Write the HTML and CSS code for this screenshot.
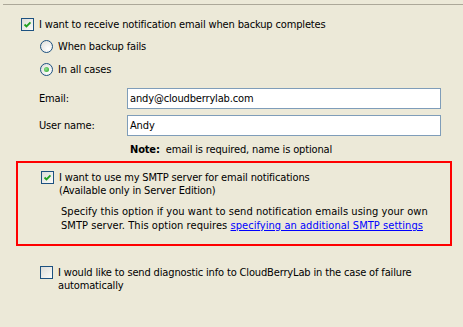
FILE: index.html
```html
<!DOCTYPE html>
<html>
<head>
    <title>Notification settings</title>
    <link rel="stylesheet" href="styles.css">
</head>
<body>
    <div class="rule"></div>
    <div class="settings">
        <div class="check-row main">
            <span class="cb checked"><svg viewBox="0 0 13 13"><path d="M3 6.5 L5.3 8.8 L10 4" /></svg></span>
            <span class="txt">I want to receive notification email when backup completes</span>
        </div>
        <div class="radio-row first">
            <span class="rb"></span>
            <span class="txt">When backup fails</span>
        </div>
        <div class="radio-row">
            <span class="rb on"></span>
            <span class="txt">In all cases</span>
        </div>
        <div class="field first">
            <label>Email:</label>
            <div class="input">andy@cloudberrylab.com</div>
        </div>
        <div class="field">
            <label>User name:</label>
            <div class="input">Andy</div>
        </div>
        <div class="note"><b>Note:</b>&nbsp; email is required, name is optional</div>

        <div class="smtp-box">
            <div class="check-row">
                <span class="cb checked"><svg viewBox="0 0 13 13"><path d="M3 6.5 L5.3 8.8 L10 4" /></svg></span>
                <span class="txt">I want to use my SMTP server for email notifications<br>(Available only in Server Edition)</span>
            </div>
            <div class="hint">
                <div>Specify this option if you want to send notification emails using your own</div>
                <div>SMTP server. This option requires <a href="#">specifying an additional SMTP settings</a></div>
            </div>
        </div>

        <div class="check-row diag">
            <span class="cb"></span>
            <span class="txt">I would like to send diagnostic info to CloudBerryLab in the case of failure<br>automatically</span>
        </div>
    </div>
</body>
</html>
```

FILE: styles.css
```css
body {
    margin: 0;
    background: #ece9d8;
    font-family: "DejaVu Sans Condensed", "DejaVu Sans", sans-serif;
    font-stretch: semi-condensed;
    font-size: 11px;
    line-height: 13px;
    letter-spacing: -0.15px;
    color: #000;
}
.rule {
    margin: 4px 0 0 3px;
    border-top: 1px solid #aca899;
}
.settings {
    padding-top: 13px;
}
.check-row {
    display: flex;
    align-items: flex-start;
    gap: 5px;
}
.check-row.main {
    padding-left: 21px;
}
.cb {
    width: 13px;
    height: 13px;
    box-sizing: border-box;
    border: 1px solid #1c5180;
    background: linear-gradient(135deg, #dcdcd7, #fbfbf9);
    flex: none;
    display: flex;
}
.cb svg {
    width: 11px;
    height: 11px;
}
.cb svg path {
    fill: none;
    stroke: #21a121;
    stroke-width: 2.2;
}
.radio-row {
    display: flex;
    align-items: center;
    gap: 5px;
    padding-left: 40px;
    margin-top: 10px;
}
.radio-row.first {
    margin-top: 9px;
}
.rb {
    width: 13px;
    height: 13px;
    box-sizing: border-box;
    border: 1px solid #1c5180;
    border-radius: 50%;
    background: radial-gradient(circle at 65% 70%, #fff, #dcdcd7);
    display: flex;
    align-items: center;
    justify-content: center;
}
.rb.on::after {
    content: "";
    width: 5px;
    height: 5px;
    border-radius: 50%;
    background: radial-gradient(circle at 40% 40%, #8fe18f, #21a121);
}
.field {
    display: flex;
    align-items: center;
    padding-left: 39px;
    margin-top: 6px;
}
.field.first {
    margin-top: 12px;
}
.field label {
    width: 88px;
}
.input {
    width: 314px;
    height: 21px;
    box-sizing: border-box;
    border: 1px solid #7f9db9;
    background: #fff;
    padding: 3px 2px;
}
.note {
    padding-left: 130px;
    margin-top: 7px;
}
.smtp-box {
    margin: 5px 0 0 16px;
    width: 436px;
    box-sizing: border-box;
    border: 2px solid #ff0000;
    padding: 8px 0 11px 23px;
}
.hint {
    margin: 8px 0 0 20px;
    line-height: 14px;
    letter-spacing: 0.05px;
}
.hint a {
    color: #0000ff;
}
.check-row.diag {
    padding-left: 40px;
    margin-top: 20px;
}
```
